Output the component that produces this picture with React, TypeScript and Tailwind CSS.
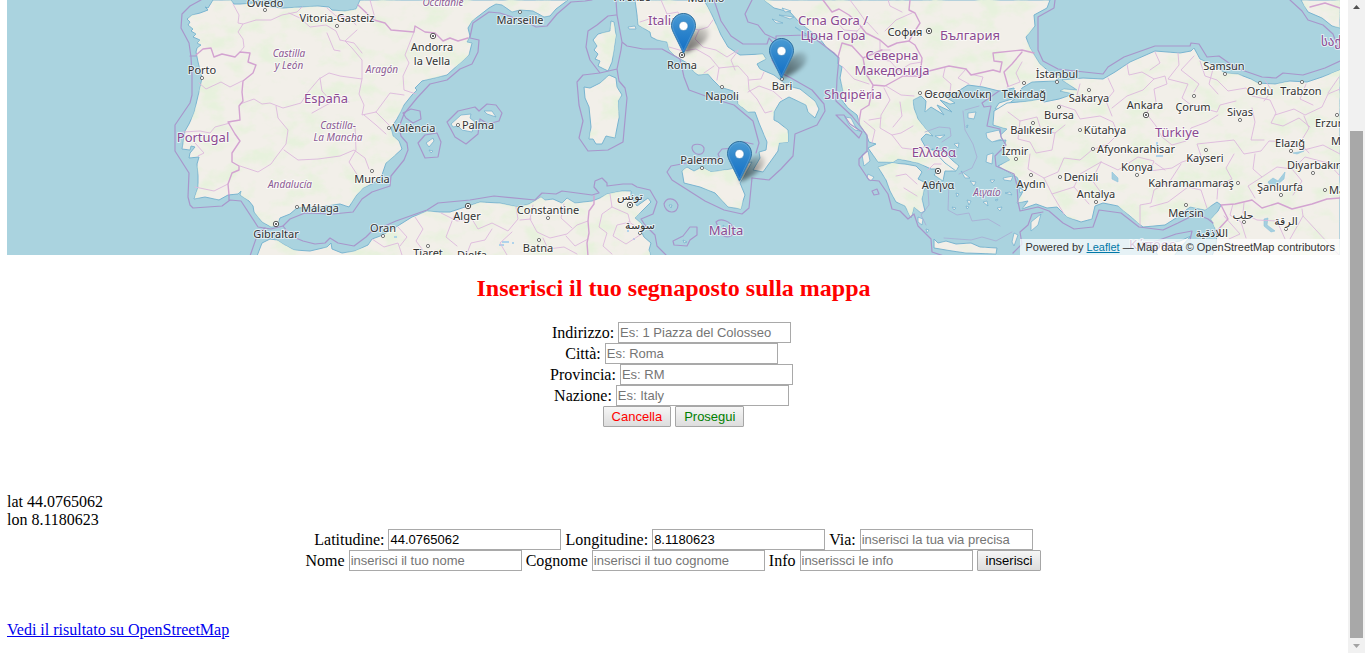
import React, { useState } from "react";

type Kind = "city" | "country" | "region";
type Label = { t: string; x: number; y: number; k?: Kind; a?: "start" | "middle" };

const COAST = [
  // Iberia and southern France
  "M213 0L208 8L205 7L208 10L200 13L192 15L187 19L190 22L188 25L193 29L191 31L196 34L193 37L200 40L197 43L201 45L197 48L196 52L198 62L202 78L200 88L197 100L194 113L189 124L185 131L182 149L190 150L191 146L195 147L190 153L189 158L199 157L197 164L198 175L198 187L194 199L205 197L219 200L228 195L238 194L241 191L240 195L249 201L253 206L254 212L262 222L271 227L277 226L280 218L290 214L297 208L320 207L340 204L349 207L356 196L363 188L374 183L382 175L386 163L392 158L402 149L399 141L393 136L391 128L397 119L404 105L412 95L417 90L415 88L422 81L447 75L459 64L469 55L472 43L467 42L470 36L468 28L472 21L480 15L489 8L496 4L502 5L512 12L520 10L533 11L544 17L550 16L556 9L568 0L360 0L356 9L345 11L332 10L329 7L318 6L300 7L283 8L272 7L255 3L240 4L234 4L231 0Z",
  // North Africa
  "M257 256L262 243L270 239L277 240L283 244L294 250L310 251L327 247L331 243L332 249L342 253L355 251L368 245L372 239L383 235L396 227L412 217L427 211L440 212L450 212L468 206L480 202L500 203L518 207L529 204L541 197L545 200L553 199L562 203L567 198L575 203L592 201L600 198L607 194L622 191L631 191L631 197L637 206L648 198L651 202L641 212L635 218L642 224L641 231L644 237L651 243L649 250L651 256Z",
  // Corsica
  "M611 21L614 22L616 35L614 50L612 62L608 71L598 66L600 61L595 59L598 54L594 50L597 46L593 40L598 34L610 31Z",
  // Sardinia
  "M584 87L590 88L600 83L609 75L616 78L617 87L622 95L618 101L619 118L615 138L606 136L602 144L596 144L593 139L589 139L591 127L589 107L585 98Z",
  // Italy
  "M635 0L637 15L638 25L650 32L651 37L657 40L667 42L669 50L675 56L687 63L694 72L698 75L708 74L712 79L720 87L733 91L737 98L738 104L748 112L755 112L759 123L767 142L766 150L759 152L760 158L753 170L763 172L768 165L778 151L779 143L788 142L788 130L778 122L774 120L774 112L780 102L789 97L806 105L808 112L815 118L819 109L815 101L800 89L788 86L774 75L760 69L757 64L766 59L763 54L740 55L728 47L721 35L712 15L704 0Z",
  // Sicily
  "M682 171L687 167L694 171L702 167L711 172L731 169L743 164L752 162L743 178L740 183L745 195L743 201L741 209L728 207L715 193L700 187L684 183Z",
  // Balkans, Thrace and the Bulgarian coast
  "M764 0L774 8L790 12L799 22L809 30L820 39L827 48L838 57L838 64L842 67L840 78L843 91L841 99L848 108L857 115L860 125L867 136L869 142L876 144L868 148L878 162L893 162L898 159L918 163L931 169L939 169L934 175L943 181L945 171L956 171L948 163L942 153L926 148L921 139L926 134L933 136L925 128L918 119L914 108L913 100L921 96L926 101L925 112L931 107L944 115L937 105L952 112L940 100L950 104L955 103L944 96L955 93L968 85L983 87L999 91L1014 88L1015 98L999 103L995 109L1002 109L1016 98L1022 88L1032 82L1055 81L1061 76L1051 73L1040 64L1030 48L1026 37L1035 26L1034 15L1047 8L1050 0Z",
  // Peloponnese
  "M878 167L892 163L905 164L916 166L922 172L918 179L928 184L924 190L922 199L925 211L921 213L914 207L911 218L905 206L896 202L890 191L886 180Z",
  // Anatolia and the Levant
  "M1062 80L1083 78L1103 79L1115 72L1130 62L1155 51L1180 53L1191 51L1194 48L1200 59L1213 65L1225 73L1238 74L1251 79L1258 83L1275 84L1290 81L1307 82L1322 77L1340 70V256H1212L1216 245L1217 233L1211 219L1218 211L1221 205L1217 202L1205 210L1190 207L1176 218L1165 225L1143 227L1130 216L1118 206L1103 203L1095 206L1092 219L1081 222L1067 217L1057 207L1047 208L1036 204L1022 209L1028 201L1017 203L1023 191L1017 177L998 166L1010 160L1003 153L1006 140L994 141L1007 129L993 125L994 111L1007 103L1030 101L1040 99L1044 102L1059 99L1074 94L1060 91L1064 89L1077 90Z",
  // Georgia
  "M1301 0L1308 12L1322 18L1332 26L1340 28V0Z",
  // Crete
  "M934 239L938 243L946 241L956 244L971 243L980 247L997 248L996 254L966 253L952 251L934 248Z",
  // Euboea
  "M932 149L943 151L952 160L959 166L956 171L945 163Z",
  // Cyprus
  "M1156 252L1162 244L1180 241L1191 236L1180 248L1174 256H1158Z",
];

const ISLANDS = [
  "M451 124L461 115L471 114L470 118L475 122L472 132L462 130L458 126L453 127Z",
  "M484 111L492 111L496 117L487 114Z",
  "M426 143L433 138L434 141L429 147Z", "M429 150L433 151L431 153Z",
  "M628 27L635 26L636 29L629 29Z",
  "M845 117L851 118L855 126L860 131L855 130L849 125Z",
  "M862 155L868 151L870 161L864 166Z", "M868 174L874 177L871 181L867 178Z",
  "M968 113L976 112L974 119L968 118Z", "M986 133L999 130L1002 139L992 142L987 138Z",
  "M987 155L993 153L992 164L986 162Z", "M1003 178L1013 176L1011 181L1004 180Z",
  "M1031 222L1041 214L1038 225L1031 231Z", "M1014 233L1018 235L1014 246L1012 242Z",
  "M961 171L970 178L965 178Z", "M970 181L976 182L974 186Z", "M975 192L982 191L981 197L976 196Z",
  "M967 200L971 201L969 205Z", "M956 193L959 194L957 197Z", "M952 207L956 208L954 210Z",
  "M983 202L987 201L988 206Z", "M990 180L995 180L992 183Z", "M997 208L1002 207L1000 211Z",
  "M1005 193L1010 192L1012 195Z", "M966 206L969 207L967 209Z", "M1019 188L1024 190L1020 193Z",
  "M954 144L959 143L958 148Z", "M935 136L945 135L940 139Z", "M918 217L923 219L922 225L918 222Z",
  "M926 229L929 230L927 233Z", "M966 126L968 125L967 128Z", "M995 200L998 199L997 201Z",
  "M782 8L791 11L785 12Z", "M779 15L794 17L790 19Z", "M772 19L783 23L776 23Z", "M795 27L808 35L800 31Z",
  "M669 205L672 205L671 208Z", "M723 225L728 229L730 233L724 230Z", "M683 240L687 242L684 243Z",
];

const MARITIME = [
  "M201 0L190 6L182 14L181 28L189 43L191 57L192 75L192 95L190 103L175 125L175 151L189 173L188 197L190 205L193 208L222 206L230 200L241 201L258 227L271 229L283 226L290 219L305 213L333 214L353 212L362 199L372 192L390 186L391 176L404 160L408 150L407 143L401 136L399 127L404 114L417 98L430 84L447 80L460 69L472 64L478 52L479 40L470 38M470 37L473 23L489 12L500 13L512 17L525 21L536 27L547 26L557 14L571 2L585 1L592 0",
  "M190 56H196M229 195V200M250 256L258 233L265 228M283 226L291 236L303 241L315 244L325 243L330 238L338 243L354 246L366 237L371 232L396 221L427 210L438 203L470 200L494 196L535 200L542 193L556 194L562 191L592 195L599 193L594 187L595 181L602 178L607 183L607 186L623 184L632 184L637 187L650 190L657 202L653 214L641 219L645 225L655 235L657 246L667 256",
  "M616 0L617 15L622 42L627 46L643 49L662 49L680 59L684 77L689 90L711 98L734 105L753 121L759 143L756 153M616 15L608 16L597 25L588 31L586 47L590 60L600 73L617 69L621 50L622 42M600 73L583 75L577 82L579 105L583 121L579 138L588 151L608 150L623 142L627 98L625 88L619 81L617 69",
  "M752 178L769 180L781 169L793 156L795 134L817 125L825 111L824 104L812 90L791 78L781 73L776 67L772 60L775 45L769 38L767 44L743 44L731 36L721 21L714 0",
  "M667 172L671 166L692 162L720 159L718 154L722 149L735 148L744 142L753 144M667 172L672 180L705 201L724 210L742 214L749 208L752 178",
  "M692 148C692 143 702 143 704 148C705 157 693 156 692 148M664 204C666 197 675 197 678 205C678 215 665 214 664 204M673 241L683 236L690 227L697 227L697 235L690 240L687 246L674 245ZM716 222C720 218 731 220 734 230C734 237 727 239 721 234Z",
  "M447 122L458 111L475 107L479 111L487 104L496 105L502 113L499 121L488 124L480 119L478 134L466 144L455 137ZM418 143L425 135L437 133L441 142L438 157L425 158ZM403 113L411 109L420 111L421 119L413 123L406 118L403 113",
  "M752 0L745 14L748 22L758 25L765 34L776 39L773 45M776 41V36L805 35L818 41L834 53L839 58L837 79L836 101L852 116L860 126L867 135L867 151L859 159L859 165L869 180L879 181L888 194L892 209L900 211L908 219L914 214L918 226L927 235L931 239L932 252L944 256",
  "M1055 0L1054 8L1038 17L1038 50L1043 61L1058 69L1075 71L1103 74L1108 67L1124 57L1155 46L1180 46L1190 46L1191 43L1199 44L1207 57L1219 56L1236 68L1262 77L1276 78L1283 73L1303 75L1325 68L1340 61M1290 0L1302 11L1308 20L1323 25L1333 34L1338 47",
  "M999 91L982 103L984 107L991 106L987 126L1000 129L1001 137L1006 145L995 156L996 166L1014 174L1017 185L1018 202L1020 211L1038 207L1049 211L1063 223L1074 229L1093 227L1099 210L1121 213L1139 227L1163 230L1178 223L1196 214L1208 219L1213 223M1013 253L1022 244L1020 232L1028 225L1032 214L1043 212",
  "M872 191L877 189L879 194L874 195ZM836 115L844 115L850 124L862 132L859 138L848 127ZM1148 244L1176 234L1192 231L1190 240",
];

const BORDERS = [
  "M196 55L203 49L211 48L214 57L222 54L235 57L240 52L250 53L248 62L256 65L253 73L243 81L242 92L243 101L239 106L240 120L228 122L235 134L240 141L232 153L232 162L239 166L239 170L232 173L228 184L229 195",
  "M358 5L374 20L385 23L391 30L414 32L415 26L425 32L435 33L443 41L450 38L458 41L468 38",
  "M594 196V204L589 211L588 221L589 233L587 243L588 256",
  "M823 0L832 12L839 9L849 15L858 23L866 33L880 40L888 47L897 43L909 41L913 34L920 23L915 13L909 10L910 0",
  "M838 57L842 43L852 46L863 58L866 74L873 85L869 105L861 110L859 122M873 85L885 86L903 76L921 76L929 71L949 66L966 69L971 75L993 70L1000 72L1002 62L994 61L993 53L1022 50L1034 53M1022 52L1012 64L1004 72L1008 86M920 76L922 58L915 45L909 41M863 58L882 50",
  "M1221 205L1235 204L1252 200L1262 208L1278 203L1292 209L1312 204L1327 199L1340 198M1221 205L1228 219L1216 232M1310 7L1325 3L1340 8",
];

const ADMIN = [
  "M233 4L239 15L238 23L243 24L238 32L243 39L244 47L240 52M243 24L256 20L271 20L282 15L297 12L302 7M289 13L300 18L310 27L326 25L336 31L340 40M327 33L334 50L340 51M240 104L254 99L262 104L270 103L283 108L301 103L308 92L319 79L329 73L340 76L362 79L362 60L352 48L345 41L357 30M276 106L278 118L288 130L286 144L276 157L271 164L258 172L240 166M284 150L298 160L318 159L340 156L354 150L365 158L369 169M320 78L322 91L332 102L312 113M199 83L206 89L221 82L230 87L242 81M183 132L200 131L210 133L215 127L230 123M195 143L204 153L198 156M195 187L214 191L228 184",
  "M362 79L359 94L364 105L362 115L376 112L390 93L404 95M364 115L376 125L386 134M376 112L389 125M355 126L356 150L349 162L358 176M340 40L354 43L362 53M414 32L405 55L409 63L403 76L404 90L416 94M327 8L336 16L349 17L356 25M340 97L349 102M370 0L375 18",
  "M372 239L384 247L398 243L402 255M415 217L423 229L416 241L425 253M441 213L457 221L472 219L478 229L492 223L508 231L518 219L516 207M466 256L471 243L485 240L492 229M512 232L500 243L507 255M533 205L530 219L537 232L550 238L567 234L577 225L588 221M543 238L548 249L564 247L577 254M564 204L561 218L572 228M610 194L612 207L602 214L599 227L607 233L603 246L612 254M612 207L628 214L630 222L617 225L613 236L626 244L640 235M629 222L641 230M454 216L446 237L457 246M398 227L407 237L400 246M520 220L531 219M566 236L575 246L588 239",
  "M661 0L667 14L678 12L682 22L690 28L699 30L708 27L713 20M640 22L652 18L662 22L667 14M699 30L695 39L703 47L716 50L727 57L738 50M669 47L683 51L696 49L710 57L719 68L717 80M719 68L738 66L748 77L749 90L757 99L765 113L772 111M749 80L761 79L764 72M738 51L731 60L735 70M748 92L759 86L773 91L782 99M704 73L714 66",
  "M835 20L844 30L857 31L867 22L878 34M857 31L852 44M842 66L854 79L869 84M884 88L890 100L881 115L880 128L892 135L901 133L913 126M900 102L902 116L893 127M881 118L869 120M892 135L902 148L918 150L928 145M885 31L896 20L912 13M945 68L943 77L951 84L950 92M966 69L958 78L969 84M970 74L983 77L980 86M850 0L859 12L866 22M874 59L890 61L899 71L910 64L922 62M886 86L901 95L914 96M902 12L890 6L888 0M880 41L880 50L890 50",
  "M928 170L934 164L941 164M896 176L906 174L917 184M904 188L917 196M864 121L875 130L872 143M1007 87L1020 82L1016 73L1022 62",
];

const PROVINCES = [
  "M1060 105L1075 110L1080 119L1100 116L1113 122L1118 134L1108 144L1092 150L1080 160L1064 158L1058 172L1044 178M1108 78L1114 91L1106 101L1112 116M1127 64L1129 75L1142 72L1154 79L1165 76L1167 84L1154 89L1156 102L1146 113L1156 126L1162 137L1172 145L1186 141L1191 128L1207 122L1218 115M1154 79L1143 90L1127 96L1112 108M1178 53L1179 65L1168 79L1188 84L1182 98L1191 105L1217 112L1220 105L1236 101M1200 61L1205 76L1217 80L1228 91L1246 88L1252 96L1270 100L1276 113L1271 123L1283 126L1299 118L1310 127",
  "M1008 112L1020 121L1037 117L1041 130L1055 133L1065 125M1020 121L1018 139L1030 142L1036 153L1052 150L1055 133M1030 154L1028 169L1044 178L1052 194L1074 187L1080 174L1101 162M1052 194L1064 214M1074 187L1089 204M1101 162L1118 170L1138 157L1154 161L1150 171L1172 168L1182 162L1201 156L1197 144L1234 140L1244 154L1261 151L1269 141L1290 142L1304 150L1323 145L1340 154M1234 154L1226 168L1232 179L1218 186L1217 199M1101 162L1092 180L1102 194",
  "M1140 226L1140 205L1151 203L1154 190L1170 181L1181 164M1150 207L1168 202L1188 187L1201 190L1207 208M1165 170L1155 163M1255 154L1253 169L1262 177L1248 186L1255 198M1262 177L1277 167L1292 169L1302 181L1293 195M1294 168L1305 157L1328 163L1340 176M1252 108L1255 122L1251 140L1264 140M1275 115L1294 109L1305 115L1322 107L1328 94L1340 89M1306 84L1300 99L1313 105M1265 80L1272 91L1264 101M1304 116L1309 128L1300 143L1309 153M1328 93L1339 77",
  "M1233 204L1230 215L1241 222L1246 238M1244 203L1243 213L1257 220L1277 221L1285 239M1302 209L1303 216L1340 256M1303 216L1290 239M1224 216L1240 234L1229 239M1155 52L1160 63L1150 70M1194 56L1181 70L1199 84L1194 92M1080 84L1077 95L1090 98M1213 69L1209 84L1218 94",
];

const LAKES = [
  "M1112 172L1118 178L1118 182L1112 179Z",
  "M1264 219L1268 218L1267 225L1275 231L1271 232L1264 226Z",
  "M1268 182L1273 178L1278 181L1285 172L1284 179L1278 184L1270 185Z",
  "M1293 153L1304 151L1297 154Z",
];

const LABELS: Label[] = [
  { t: "Oviedo", x: 265, y: 7 },
  { t: "Vitoria-Gasteiz", x: 337, y: 22 },
  { t: "Marseille", x: 520, y: 24 },
  { t: "Andorra", x: 432, y: 51 },
  { t: "la Vella", x: 432, y: 65 },
  { t: "Porto", x: 202, y: 74 },
  { t: "València", x: 414, y: 132 },
  { t: "Palma", x: 478, y: 129 },
  { t: "Murcia", x: 372, y: 183 },
  { t: "Málaga", x: 320, y: 212 },
  { t: "Gibraltar", x: 276, y: 238 },
  { t: "Oran", x: 383, y: 232 },
  { t: "Alger", x: 467, y: 220 },
  { t: "Constantine", x: 548, y: 214 },
  { t: "Batna", x: 538, y: 252 },
  { t: "Tiaret", x: 428, y: 257 },
  { t: "Djelfa", x: 472, y: 259 },
  { t: "تونس", x: 630, y: 200 },
  { t: "سوسة", x: 640, y: 229 },
  { t: "Firenze", x: 632, y: 1 },
  { t: "Marino", x: 706, y: 2 },
  { t: "Roma", x: 682, y: 69 },
  { t: "Napoli", x: 722, y: 100 },
  { t: "Bari", x: 782, y: 90 },
  { t: "Palermo", x: 702, y: 164 },
  { t: "София", x: 905, y: 36 },
  { t: "Θεσσαλονίκη", x: 958, y: 98 },
  { t: "Tekirdağ", x: 1024, y: 98 },
  { t: "İstanbul", x: 1057, y: 78 },
  { t: "Bursa", x: 1059, y: 119 },
  { t: "Balıkesir", x: 1032, y: 134 },
  { t: "İzmir", x: 1015, y: 155 },
  { t: "Aydın", x: 1031, y: 188 },
  { t: "Αθήνα", x: 938, y: 189 },
  { t: "Sakarya", x: 1089, y: 102 },
  { t: "Kütahya", x: 1105, y: 134 },
  { t: "Ankara", x: 1145, y: 109 },
  { t: "Çorum", x: 1193, y: 111 },
  { t: "Samsun", x: 1224, y: 70 },
  { t: "Sivas", x: 1240, y: 116 },
  { t: "Ordu", x: 1260, y: 95 },
  { t: "Trabzon", x: 1301, y: 95 },
  { t: "Erzurum", x: 1315, y: 127, a: "start" },
  { t: "Muş", x: 1331, y: 145, a: "start" },
  { t: "Elazığ", x: 1290, y: 147 },
  { t: "Diyarbakır", x: 1287, y: 169, a: "start" },
  { t: "Mardin", x: 1329, y: 194, a: "start" },
  { t: "Afyonkarahisar", x: 1136, y: 153 },
  { t: "Kayseri", x: 1205, y: 162 },
  { t: "Konya", x: 1137, y: 171 },
  { t: "Denizli", x: 1081, y: 181 },
  { t: "Antalya", x: 1096, y: 198 },
  { t: "Kahramanmaraş", x: 1191, y: 187 },
  { t: "Şanlıurfa", x: 1280, y: 191 },
  { t: "Mersin", x: 1186, y: 217 },
  { t: "حلب", x: 1243, y: 219 },
  { t: "الرقة", x: 1286, y: 225 },
  { t: "اللاذقية", x: 1212, y: 237 },
  { t: "España", x: 326, y: 103, k: "country" },
  { t: "Portugal", x: 203, y: 142, k: "country" },
  { t: "Italia", x: 648, y: 25, k: "country", a: "start" },
  { t: "Malta", x: 726, y: 235, k: "country" },
  { t: "Crna Gora /", x: 833, y: 25, k: "country" },
  { t: "Црна Гора", x: 833, y: 40, k: "country" },
  { t: "Северна", x: 892, y: 60, k: "country" },
  { t: "Македонија", x: 892, y: 75, k: "country" },
  { t: "Shqipëria", x: 853, y: 99, k: "country" },
  { t: "България", x: 970, y: 40, k: "country" },
  { t: "Ελλάδα", x: 934, y: 157, k: "country" },
  { t: "Türkiye", x: 1177, y: 137, k: "country" },
  { t: "Κύπρος", x: 1152, y: 249, k: "country" },
  { t: "საქართველო", x: 1321, y: 46, k: "country", a: "start" },
  { t: "Castilla", x: 289, y: 57, k: "region" },
  { t: "y León", x: 289, y: 69, k: "region" },
  { t: "Aragón", x: 382, y: 73, k: "region" },
  { t: "Castilla-", x: 338, y: 129, k: "region" },
  { t: "La Mancha", x: 338, y: 141, k: "region" },
  { t: "Andalucía", x: 290, y: 188, k: "region" },
  { t: "Occitanie", x: 443, y: 6, k: "region" },
  { t: "Αιγαίο", x: 987, y: 196, k: "region" },
];

const DOTS: [number, number][] = [
  [265, 10], [337, 26], [520, 12], [202, 78], [389, 128], [458, 125], [372, 171], [297, 207], [383, 236],
  [548, 218], [539, 240], [428, 246], [640, 233], [722, 87], [782, 79], [702, 168], [920, 93], [1024, 83],
  [1057, 82], [1059, 107], [1033, 123], [1016, 159], [1031, 175], [1060, 177], [1089, 90], [1080, 130],
  [1093, 149], [1194, 96], [1225, 74], [1240, 120], [1260, 83], [1302, 82], [1337, 115], [1206, 150],
  [1137, 175], [1096, 202], [1238, 183], [1281, 195], [1291, 151], [1313, 173], [1325, 190], [1186, 205],
  [1244, 222], [1286, 229],
];

const CAPITALS: [number, number][] = [
  [433, 36], [276, 224], [468, 206], [630, 205], [682, 55], [929, 31], [938, 171], [1146, 115],
];

const PINS: [number, number][] = [[671, 13], [769, 38], [727, 141]];

const LABEL_CLASS: Record<Kind, string> = {
  city: "fill-[#333333] text-[11px]",
  country: "fill-[#8b4a92] text-[13px]",
  region: "fill-[#8c5a94] text-[10px] italic",
};

function MapCanvas() {
  return (
    <svg
      className="block h-full w-full"
      viewBox="7 0 1333 255"
      preserveAspectRatio="xMidYMid slice"
      role="img"
      aria-label="Mappa del Mediterraneo"
    >
      <defs>
        <clipPath id="land">
          {COAST.map((d, i) => (
            <path key={i} d={d} />
          ))}
        </clipPath>
        <filter id="forest" x="0" y="0" width="100%" height="100%">
          <feTurbulence type="fractalNoise" baseFrequency="0.04 0.06" numOctaves={6} seed={11} />
          <feColorMatrix values="0 0 0 0 0.8  0 0 0 0 0.88  0 0 0 0 0.72  0 3.4 0 0 -1.6" />
        </filter>
        <filter id="soft" x="-50%" y="-50%" width="200%" height="200%">
          <feGaussianBlur stdDeviation="2.2" />
        </filter>
        <linearGradient id="shade" x1="0" y1="1" x2="1" y2="0">
          <stop offset="0" stopColor="#000" stopOpacity="0.6" />
          <stop offset="0.5" stopColor="#000" stopOpacity="0.38" />
          <stop offset="1" stopColor="#000" stopOpacity="0.06" />
        </linearGradient>
        <linearGradient id="pinFill" x1="0" y1="0" x2="0" y2="1">
          <stop offset="0" stopColor="#4a9bd3" />
          <stop offset="0.5" stopColor="#2a82cb" />
          <stop offset="1" stopColor="#126fc6" />
        </linearGradient>
        <linearGradient id="pinEdge" x1="0" y1="0" x2="0" y2="1">
          <stop offset="0" stopColor="#2e6c97" />
          <stop offset="1" stopColor="#3883b7" />
        </linearGradient>
        <g id="pin">
          <path
            d="M12.500 41L17 25C21 19 29 12 36 15C40 20 37 26 32 30C26 35 19 38 12.500 41Z"
            fill="url(#shade)"
            filter="url(#soft)"
          />
          <path
            d="M12.5 .5C5.8 .5 .5 6 .5 12.6C.5 16 2 18.6 3.5 21.8L12.5 40.2L21.5 21.8C23 18.6 24.5 16 24.5 12.6C24.5 6 19.2 .5 12.5 .5Z"
            fill="url(#pinFill)"
            stroke="url(#pinEdge)"
          />
          <path
            d="M12.5 1.6C6.4 1.6 1.6 6.5 1.6 12.6C1.6 15.8 3 18.2 4.5 21.3L12.5 37.8L20.5 21.3C22 18.2 23.4 15.8 23.4 12.6C23.4 6.5 18.6 1.6 12.5 1.6Z"
            fill="none"
            stroke="#fff"
            strokeOpacity="0.14"
          />
          <circle cx="12.5" cy="13" r="4.5" fill="#fff" stroke="#2f78b4" strokeWidth="0.6" />
        </g>
      </defs>

      <rect x="7" width="1333" height="255" fill="#aad3df" />
      <g fill="#f2efe9" stroke="#79b4d0" strokeWidth="1" strokeLinejoin="round">
        {COAST.map((d, i) => (
          <path key={i} d={d} />
        ))}
        {ISLANDS.map((d, i) => (
          <path key={i} d={d} strokeWidth="0.8" />
        ))}
      </g>
      <g clipPath="url(#land)">
        <rect x="7" width="1333" height="255" filter="url(#forest)" />
      </g>
      <g fill="#a5cfdf" stroke="#8cc2dc" strokeWidth="0.6">
        {LAKES.map((d, i) => (
          <path key={i} d={d} />
        ))}
      </g>
      <path
        d="M1157 142V148M1156 156H1163M502 242H509M499 245L504 245M512 243H514M394 237H397M633 239H635M627 231H629"
        stroke="#6fb7ee"
        fill="none"
      />
      <g fill="none" strokeLinejoin="round" strokeLinecap="round">
        <g stroke="#dcb8dc" strokeWidth="0.9">
          {[...ADMIN, ...PROVINCES].map((d, i) => (
            <path key={i} d={d} />
          ))}
        </g>
        <g stroke="#d3a3d1" strokeWidth="1.4">
          {BORDERS.map((d, i) => (
            <path key={i} d={d} />
          ))}
        </g>
        <g stroke="#a896cb" strokeWidth="1.2">
          {MARITIME.map((d, i) => (
            <path key={i} d={d} />
          ))}
        </g>
        <path
          d="M965 110L979 106M963 111L965 130L973 144L977 157L972 168L959 174M925 132L939 127L950 128L951 136L942 142M949 183L948 210L957 215L969 213L972 221L988 219L1000 226M928 190L929 205L921 215L926 225M944 238L971 240L982 237L996 241L1012 232"
          stroke="#a9a5d3"
          strokeWidth="0.7"
        />
      </g>

      <g fill="#fff" stroke="#555" strokeWidth="0.8">
        {DOTS.map(([x, y]) => (
          <circle key={`${x}-${y}`} cx={x} cy={y} r="1.6" />
        ))}
      </g>
      {CAPITALS.map(([x, y]) => (
        <g key={`${x}-${y}`}>
          <circle cx={x} cy={y} r="2.7" fill="#fff" stroke="#444" strokeWidth="0.9" />
          <circle cx={x} cy={y} r="1.1" fill="#444" />
        </g>
      ))}

      <g className="font-['Noto_Sans','DejaVu_Sans',sans-serif]">
        {LABELS.map(({ t, x, y, k = "city", a = "middle" }) => (
          <text
            key={t}
            x={x}
            y={y}
            textAnchor={a}
            className={LABEL_CLASS[k]}
            stroke="#fff"
            strokeOpacity="0.65"
            strokeWidth="2"
            strokeLinejoin="round"
            paintOrder="stroke"
          >
            {t}
          </text>
        ))}
      </g>

      {PINS.map(([x, y]) => (
        <use key={x} href="#pin" x={x} y={y} />
      ))}
    </svg>
  );
}

type FieldProps = { id: string; label: string; placeholder?: string; initial?: string };

function Field({ id, label, placeholder, initial = "" }: FieldProps) {
  const [value, setValue] = useState(initial);
  return (
    <div className="flex items-center gap-1">
      <label htmlFor={id}>{label}</label>
      <input
        id={id}
        name={id}
        type="text"
        value={value}
        placeholder={placeholder}
        onChange={(e) => setValue(e.target.value)}
        className="h-[21px] w-[173px] border border-[#a9a9a9] bg-white px-px font-['Liberation_Sans',Arial,sans-serif] text-[13px] text-black placeholder:text-[#757575]"
      />
    </div>
  );
}

function PushButton({ className, children, type = "button" }: { className: string; children: string; type?: "button" | "reset" | "submit" }) {
  return (
    <button
      type={type}
      className={`h-[21px] rounded-[1px] border border-[#a6a6a6] bg-linear-to-b from-[#f6f6f6] to-[#dddddd] px-2 font-['Liberation_Sans',Arial,sans-serif] text-[13px] leading-[19px] ${className}`}
    >
      {children}
    </button>
  );
}

function ScrollTrack() {
  return (
    <div aria-hidden="true" className="sticky top-0 flex h-screen w-[17px] shrink-0 flex-col items-center bg-[#f1f1f1]">
      <svg className="h-[15px] w-[17px] shrink-0" viewBox="0 0 17 15">
        <path d="M5 9L8.500 5L12 9Z" fill="#505050" />
      </svg>
      <div className="flex-[116]" />
      <div className="w-[13px] flex-[507] bg-[#a8a8a8]" />
      <svg className="h-[15px] w-[17px] shrink-0" viewBox="0 0 17 15">
        <path d="M5 6L8.500 10L12 6Z" fill="#a3a3a3" />
      </svg>
    </div>
  );
}

export default function App() {
  const stay = (e: React.FormEvent) => e.preventDefault();
  return (
    <div className="flex min-h-screen bg-white font-['Liberation_Serif','Times_New_Roman',serif] text-base leading-[18px] text-black">
      <main className="min-w-0 flex-1 pr-2 pl-[7px]">
        <div className="relative h-[255px] overflow-hidden">
          <MapCanvas />
          <div className="absolute right-0 bottom-0 bg-white/70 px-[5px] font-['Liberation_Sans',Arial,sans-serif] text-[11px] leading-4 text-[#333333]">
            Powered by <a href="https://leafletjs.com" className="text-[#0078a8] underline">Leaflet</a> — Map data © OpenStreetMap contributors
          </div>
        </div>

        <h2 className="my-5 text-center text-2xl leading-[27px] font-bold text-[#ff0000]">Inserisci il tuo segnaposto sulla mappa</h2>

        <form onSubmit={stay} className="flex flex-col items-center">
          <div className="flex flex-col items-center pr-1">
            <Field id="indirizzo" label="Indirizzo:" placeholder="Es: 1 Piazza del Colosseo" />
            <Field id="citta" label="Città:" placeholder="Es: Roma" />
            <Field id="provincia" label="Provincia:" placeholder="Es: RM" />
            <Field id="nazione" label="Nazione:" placeholder="Es: Italy" />
          </div>
          <div className="flex gap-1">
            <PushButton type="reset" className="text-[#ff0000]">Cancella</PushButton>
            <PushButton type="submit" className="text-[#008000]">Prosegui</PushButton>
          </div>
        </form>

        <div className="mt-[66px]">
          <p>lat 44.0765062</p>
          <p>lon 8.1180623</p>
        </div>

        <form onSubmit={stay}>
          <div className="flex flex-wrap justify-center gap-x-1">
            <Field id="latitudine" label="Latitudine:" initial="44.0765062" />
            <Field id="longitudine" label="Longitudine:" initial="8.1180623" />
            <Field id="via" label="Via:" placeholder="inserisci la tua via precisa" />
          </div>
          <div className="flex flex-wrap justify-center gap-x-1">
            <Field id="nome" label="Nome" placeholder="inserisci il tuo nome" />
            <Field id="cognome" label="Cognome" placeholder="inserisci il tuo cognome" />
            <Field id="info" label="Info" placeholder="inserissci le info" />
            <PushButton type="submit" className="text-black">inserisci</PushButton>
          </div>
        </form>

        <p className="mt-[50px]">
          <a href="https://www.openstreetmap.org" className="text-[#0000ee] underline">Vedi il risultato su OpenStreetMap</a>
        </p>
      </main>
      <ScrollTrack />
    </div>
  );
}
